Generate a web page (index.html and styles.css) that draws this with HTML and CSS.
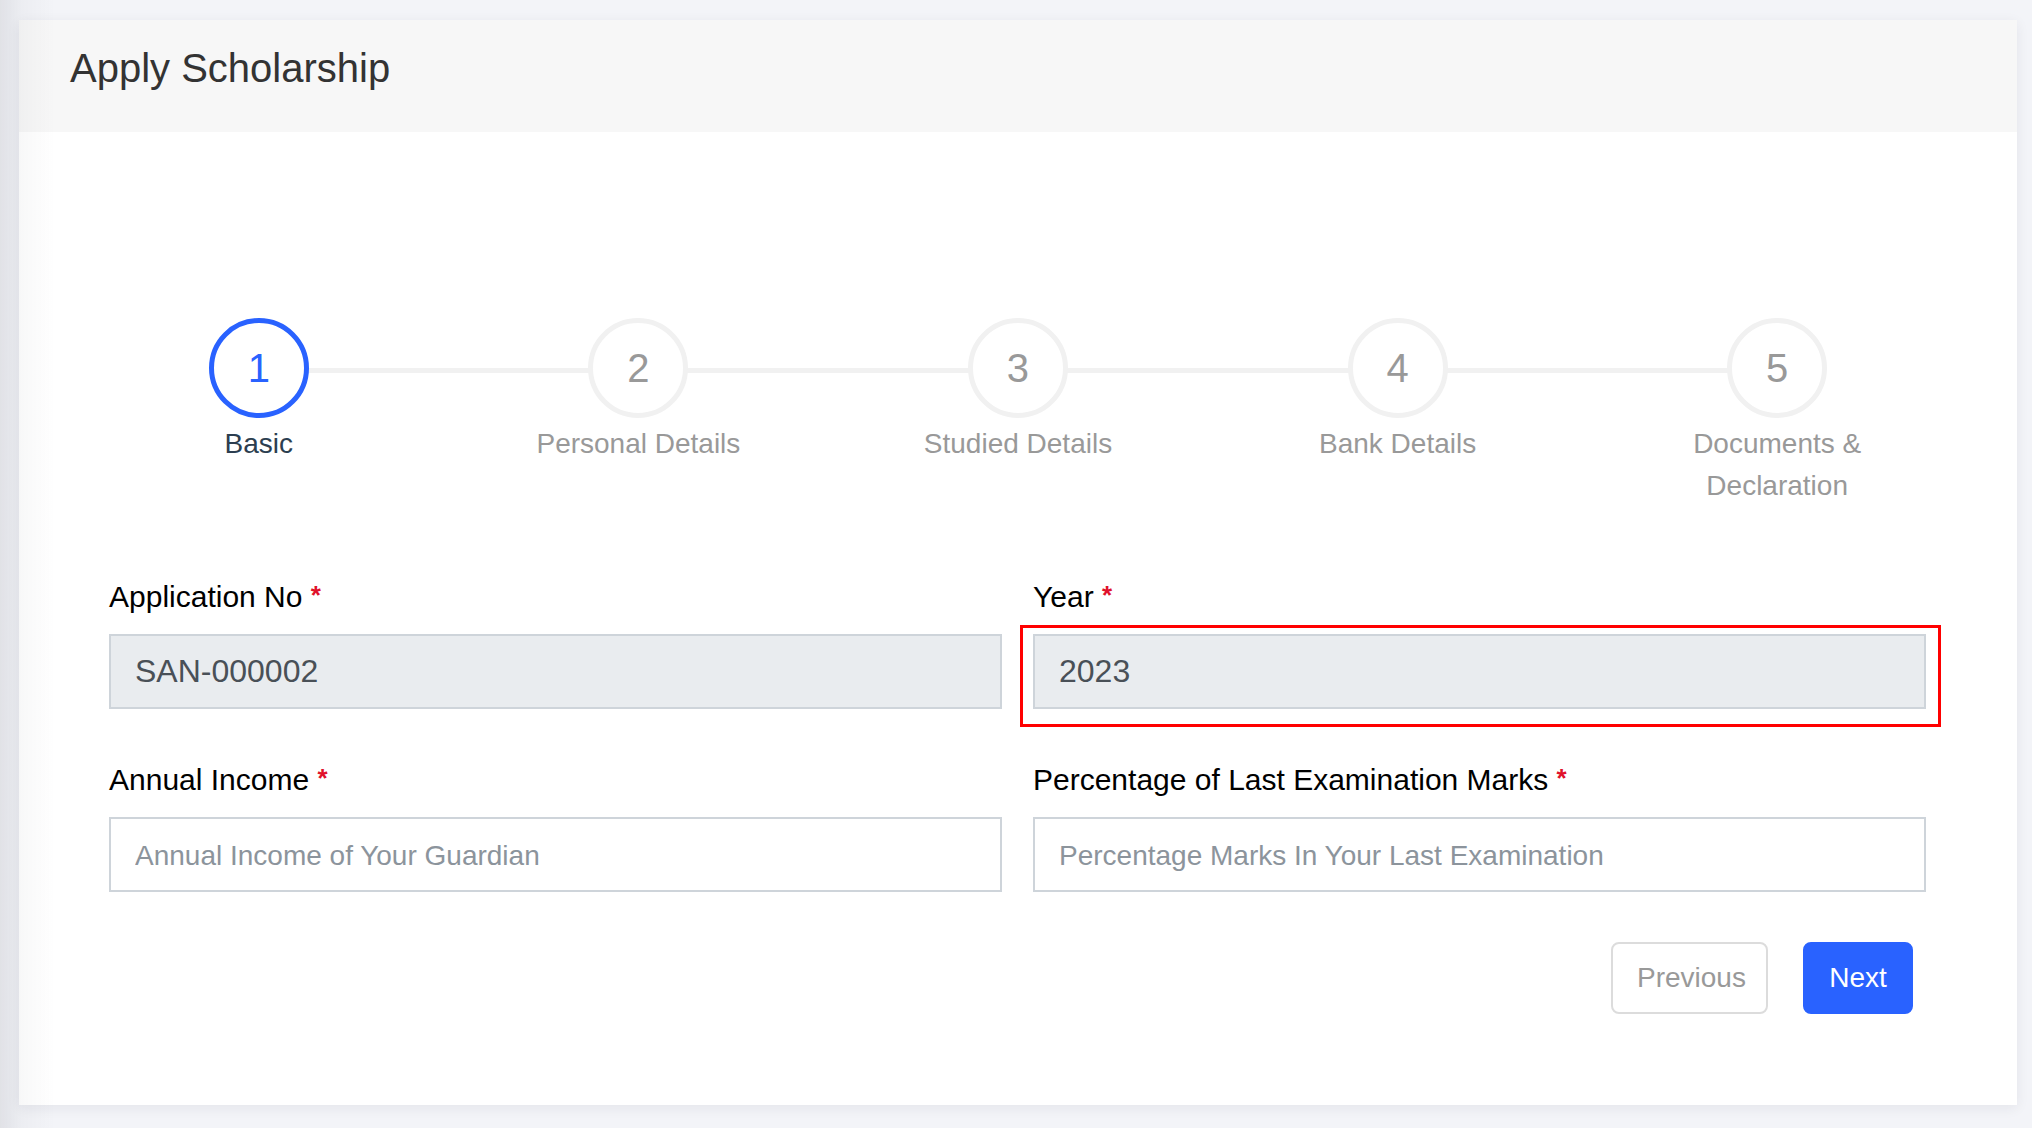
FILE: index.html
```html
<!DOCTYPE html>
<html lang="en">
<head>
<meta charset="utf-8">
<title>Apply Scholarship</title>
<link rel="stylesheet" href="styles.css">
</head>
<body>
<div class="edge-shadow"></div>
<main class="card">
  <header class="card-header">
    <h1 class="card-title">Apply Scholarship</h1>
  </header>
  <section class="card-body">
    <ol class="stepper">
      <li class="step active"><span class="step-circle">1</span><span class="step-label">Basic</span></li>
      <li class="step"><span class="step-circle">2</span><span class="step-label">Personal Details</span></li>
      <li class="step"><span class="step-circle">3</span><span class="step-label">Studied Details</span></li>
      <li class="step"><span class="step-circle">4</span><span class="step-label">Bank Details</span></li>
      <li class="step"><span class="step-circle">5</span><span class="step-label">Documents &amp;<br>Declaration</span></li>
    </ol>
    <form class="form">
      <div class="form-grid">
        <div class="field">
          <label class="field-label">Application No <span class="req">*</span></label>
          <div class="control-wrap">
            <input class="control" type="text" value="SAN-000002" readonly>
          </div>
        </div>
        <div class="field">
          <label class="field-label">Year <span class="req">*</span></label>
          <div class="control-wrap highlighted">
            <input class="control" type="text" value="2023" readonly>
          </div>
        </div>
        <div class="field">
          <label class="field-label">Annual Income <span class="req">*</span></label>
          <div class="control-wrap">
            <input class="control" type="text" placeholder="Annual Income of Your Guardian">
          </div>
        </div>
        <div class="field">
          <label class="field-label">Percentage of Last Examination Marks <span class="req">*</span></label>
          <div class="control-wrap">
            <input class="control" type="text" placeholder="Percentage Marks In Your Last Examination">
          </div>
        </div>
      </div>
      <div class="actions">
        <button type="button" class="btn btn-prev">Previous</button>
        <button type="button" class="btn btn-next">Next</button>
      </div>
    </form>
  </section>
</main>
</body>
</html>
```
FILE: styles.css
```css
* { box-sizing: border-box; }

html, body {
  margin: 0;
  padding: 0;
}

body {
  background: #f3f4f8;
  font-family: "Liberation Sans", Arial, Helvetica, sans-serif;
  color: #212529;
  padding: 20px 15px 22px 19px;
  min-height: 1128px;
}

.edge-shadow {
  position: fixed;
  left: 0;
  top: 0;
  bottom: 0;
  width: 55px;
  background: linear-gradient(to right, rgba(40, 45, 60, 0.09), rgba(40, 45, 60, 0.03) 40%, rgba(40, 45, 60, 0));
  pointer-events: none;
  z-index: 5;
}

.card {
  background: #ffffff;
  box-shadow: 0 3px 12px rgba(30, 35, 60, 0.07);
}

.card-header {
  background: #f7f7f7;
  padding: 24px 51px 40px;
}

.card-title {
  margin: 0;
  font-size: 40px;
  line-height: 48px;
  font-weight: 400;
  color: #333333;
}

.card-body {
  padding: 186px 50px 91px;
}

/* Stepper */
.stepper {
  list-style: none;
  margin: 0;
  padding: 0;
  display: flex;
}

.step {
  flex: 1 1 0;
  display: flex;
  flex-direction: column;
  align-items: center;
  position: relative;
}

.step + .step::before {
  content: "";
  position: absolute;
  top: 50px;
  left: -50%;
  right: 50%;
  height: 5px;
  background: #f1f1f1;
  z-index: 0;
}

.step-circle {
  position: relative;
  z-index: 1;
  width: 100px;
  height: 100px;
  border-radius: 50%;
  border: 5px solid #f1f1f1;
  background: #ffffff;
  display: flex;
  align-items: center;
  justify-content: center;
  font-size: 40px;
  line-height: 1;
  color: #999999;
}

.step.active .step-circle {
  border-color: #2962ff;
  color: #2962ff;
}

.step-label {
  margin-top: 5px;
  font-size: 28px;
  line-height: 42px;
  color: #999999;
  text-align: center;
  min-height: 84px;
}

.step.active .step-label {
  color: #2c3e50;
}

/* Form */
.form {
  margin: 66px 41px 0 40px;
}

.form-grid {
  display: grid;
  grid-template-columns: 1fr 1fr;
  column-gap: 31px;
  row-gap: 47px;
}

.field-label {
  display: block;
  font-size: 30px;
  line-height: 45px;
  color: #000000;
  margin-bottom: 15px;
}

.req {
  color: #e0112b;
  font-weight: 700;
  font-size: 26px;
  vertical-align: 3px;
}

.control-wrap {
  position: relative;
}

.highlighted::after {
  content: "";
  position: absolute;
  top: -9px;
  left: -13px;
  right: -15px;
  bottom: -18px;
  border: 3px solid #ff0000;
  pointer-events: none;
}

.control {
  display: block;
  width: 100%;
  height: 75px;
  padding: 0 24px;
  border: 2px solid #ced4da;
  border-radius: 0;
  background: #ffffff;
  font-family: "Liberation Sans", Arial, Helvetica, sans-serif;
  font-size: 32px;
  color: #495057;
  outline: none;
}

.control[readonly] {
  background: #e9ecef;
}

.control::placeholder {
  font-size: 28px;
  color: #8c949c;
  opacity: 1;
}

.actions {
  display: flex;
  justify-content: flex-end;
  gap: 35px;
  margin-top: 50px;
  padding-right: 13px;
}

.btn {
  height: 72px;
  padding: 0 24px;
  border-radius: 8px;
  font-family: "Liberation Sans", Arial, Helvetica, sans-serif;
  font-size: 28px;
  cursor: pointer;
}

.btn-prev {
  background: #ffffff;
  border: 2px solid #dcdcdc;
  color: #999999;
  width: 157px;
}

.btn-next {
  background: #2962ff;
  border: 2px solid #2962ff;
  color: #ffffff;
  width: 110px;
}
```
